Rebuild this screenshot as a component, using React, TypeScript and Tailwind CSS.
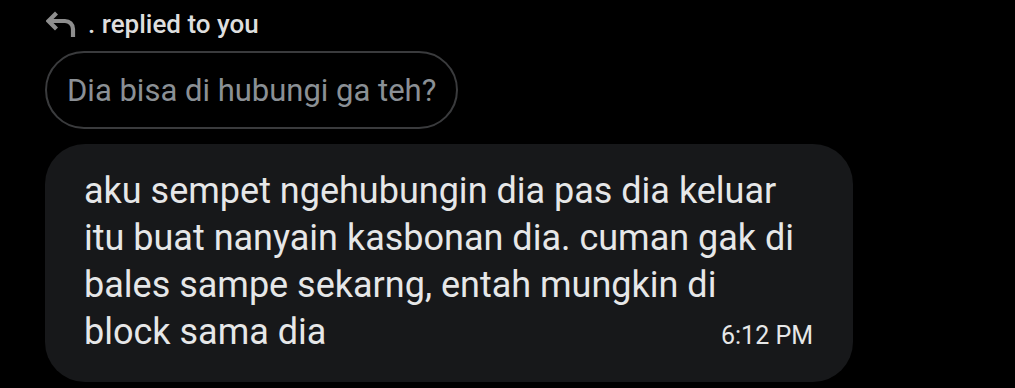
export default function App() {
  return (
    <div className="flex h-[388px] w-[1015px] flex-col items-start overflow-hidden bg-black pl-[45px] font-['Roboto',sans-serif]">
      <div className="flex h-[46px] flex-none items-center gap-[12px] pl-[1px] pt-[1px]">
        <svg width="30" height="26" viewBox="0 0 30 26" fill="none" stroke="#8e8e8e" strokeWidth="4.2" strokeLinecap="butt" strokeLinejoin="miter">
          <path d="M10.5 2 L2.5 10 L10.5 18" />
          <path d="M2.5 10 H19 A8 8 0 0 1 27 18 V26" />
        </svg>
        <span className="whitespace-nowrap text-[26px] font-medium leading-none text-[#dedede]">. replied to you</span>
      </div>
      <div className="mt-[5px] flex h-[78px] flex-none items-center rounded-full border-2 border-[#3a3b3d] px-[20px]">
        <span className="whitespace-nowrap text-[31px] leading-none text-[#8b9095]">Dia bisa di hubungi ga teh?</span>
      </div>
      <div className="mt-[15px] flex w-[808px] flex-none flex-col rounded-[40px] bg-[#17181a] pb-[26px] pl-[39px] pr-[40px] pt-[24px] text-[#e6e7e8]">
        <div className="whitespace-nowrap text-[36px] leading-[47px]">aku sempet ngehubungin dia pas dia keluar</div>
        <div className="whitespace-nowrap text-[36px] leading-[47px]">itu buat nanyain kasbonan dia. cuman gak di</div>
        <div className="whitespace-nowrap text-[36px] leading-[47px]">bales sampe sekarng, entah mungkin di</div>
        <div className="flex items-baseline justify-between">
          <span className="whitespace-nowrap text-[36px] leading-[47px]">block sama dia</span>
          <span className="whitespace-nowrap text-[25px] leading-none">6:12 PM</span>
        </div>
      </div>
    </div>
  );
}
